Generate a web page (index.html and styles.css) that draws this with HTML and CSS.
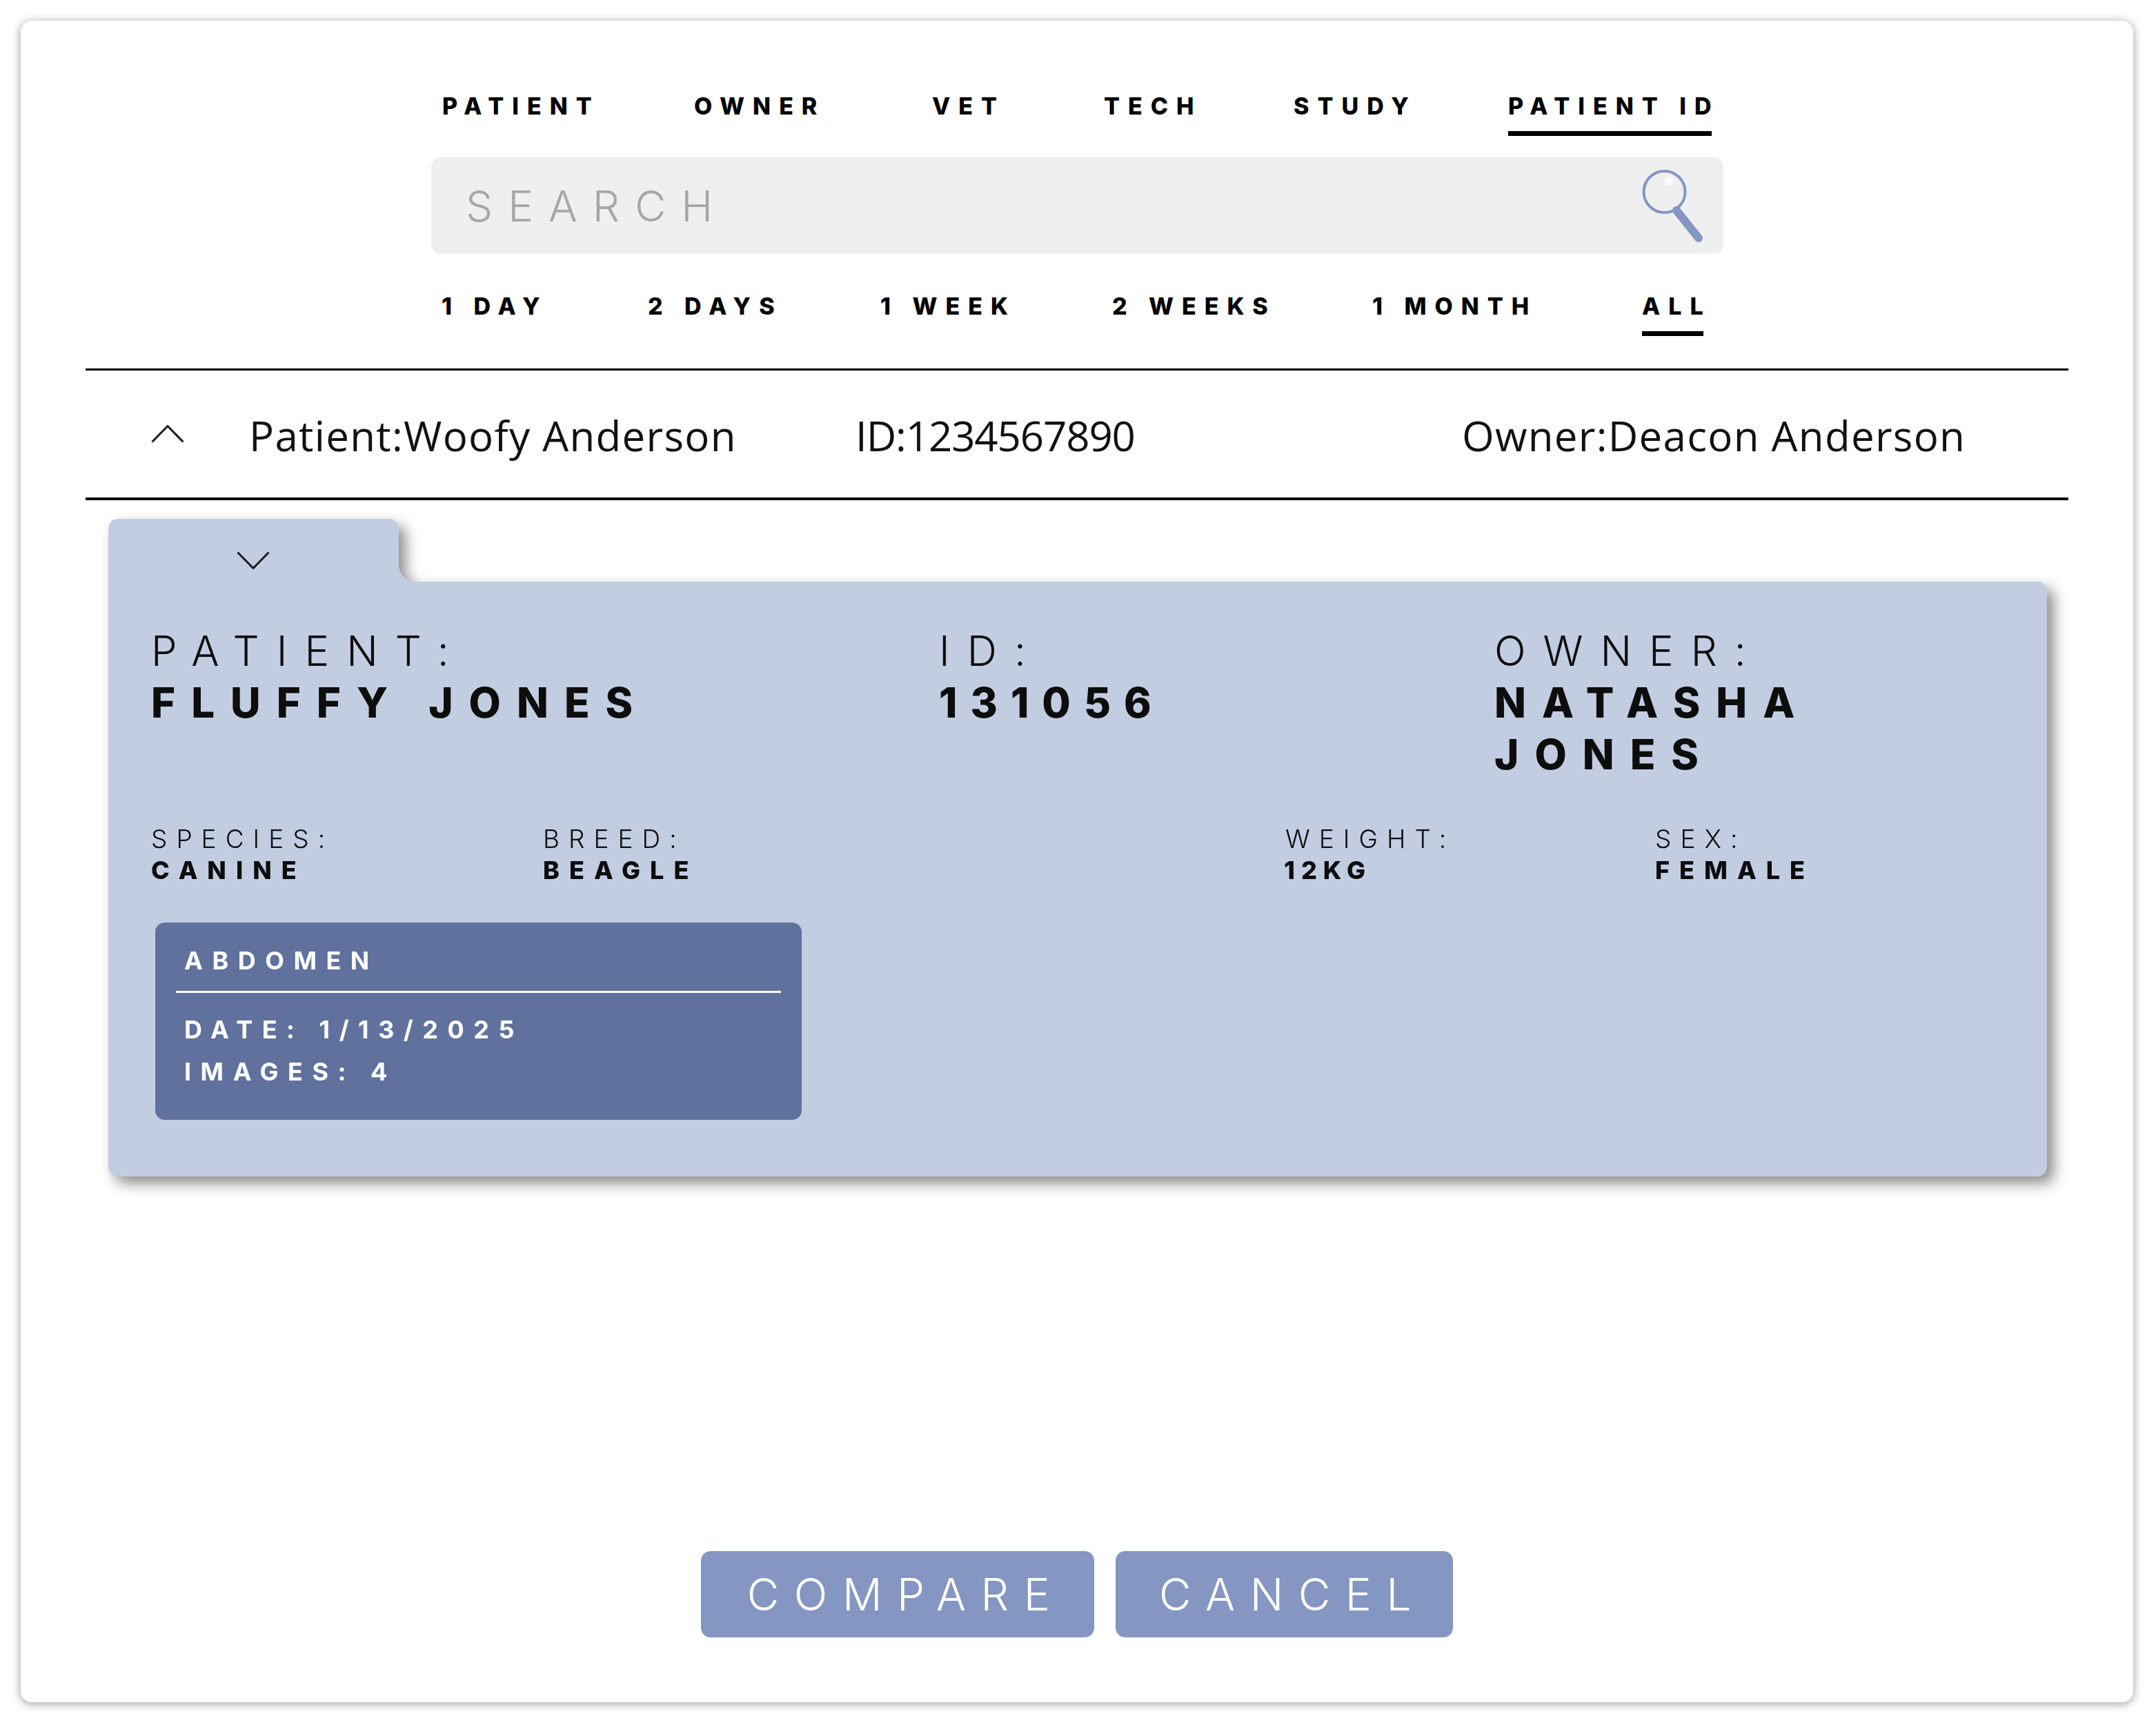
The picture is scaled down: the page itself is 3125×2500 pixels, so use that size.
FILE: index.html
```html
<!DOCTYPE html>
<html lang="en">
<head>
  <meta charset="UTF-8">
  <title>Compare Study</title>
  <link rel="stylesheet" href="styles.css">
</head>
<body>
  <div class="window">
    <div class="filters">
      <div class="tabs field-tabs">
        <span>PATIENT</span>
        <span>OWNER</span>
        <span>VET</span>
        <span>TECH</span>
        <span>STUDY</span>
        <span class="active">PATIENT ID</span>
      </div>
      <div class="search">
        <span class="search-text">SEARCH</span>
        <svg class="search-icon" viewBox="0 0 88 110">
          <circle cx="32.5" cy="33" r="30" fill="none" stroke="#8496c1" stroke-width="4"/>
          <circle cx="39" cy="18" r="6.5" fill="#fafafa"/>
          <path d="M50 60 L82 100" fill="none" stroke="#8496c1" stroke-width="12" stroke-linecap="round"/>
        </svg>
      </div>
      <div class="tabs time-tabs">
        <span>1 DAY</span>
        <span>2 DAYS</span>
        <span>1 WEEK</span>
        <span>2 WEEKS</span>
        <span>1 MONTH</span>
        <span class="active">ALL</span>
      </div>
    </div>

    <div class="result-row">
      <svg class="chevron" viewBox="0 0 48 26"><path d="M1.5 24.5 L24 1.5 L46.5 24.5"/></svg>
      <span>Patient:Woofy Anderson</span>
      <span class="result-id">ID:1234567890</span>
      <span>Owner:Deacon Anderson</span>
    </div>

    <div class="folder">
      <div class="folder-tab">
        <svg class="chevron" viewBox="0 0 48 26"><path d="M1.5 1.5 L24 24.5 L46.5 1.5"/></svg>
      </div>
      <div class="folder-body">
        <div class="main-info">
          <div class="info-big">
            <div class="label">PATIENT:</div>
            <div class="value">FLUFFY JONES</div>
          </div>
          <div class="info-big">
            <div class="label">ID:</div>
            <div class="value digits">131056</div>
          </div>
          <div class="info-big">
            <div class="label">OWNER:</div>
            <div class="value">NATASHA JONES</div>
          </div>
        </div>
        <div class="sub-info">
          <div class="info-small">
            <div class="label">SPECIES:</div>
            <div class="value">CANINE</div>
          </div>
          <div class="info-small">
            <div class="label">BREED:</div>
            <div class="value">BEAGLE</div>
          </div>
          <div class="info-small">
            <div class="label">WEIGHT:</div>
            <div class="value digits">12KG</div>
          </div>
          <div class="info-small">
            <div class="label">SEX:</div>
            <div class="value">FEMALE</div>
          </div>
        </div>
        <div class="study-card">
          <div class="study-title">ABDOMEN</div>
          <div class="study-line">DATE: 1/13/2025</div>
          <div class="study-line">IMAGES: 4</div>
        </div>
      </div>
    </div>

    <div class="actions">
      <button class="compare-btn">COMPARE</button>
      <button class="cancel-btn">CANCEL</button>
    </div>
  </div>
</body>
</html>
```

FILE: styles.css
```css
html, body {
  margin: 0;
  padding: 0;
  background-color: #FFFFFF;
}
body {
  width: 3125px;
  height: 2500px;
  overflow: hidden;
  font-family: Inter, "Liberation Sans", sans-serif;
  color: #000000;
}
.window {
  margin: 30px 0 0 30px;
  width: 3062px;
  height: 2437px;
  box-sizing: border-box;
  background-color: #FFFFFF;
  border-radius: 16px;
  box-shadow: 0 2px 14px rgba(0, 0, 0, 0.4);
  padding-top: 111px;
  display: flex;
  flex-direction: column;
  position: relative;
}
.filters {
  margin-left: 595px;
  width: 1873px;
}
.tabs {
  display: grid;
  justify-items: start;
  font-weight: 800;
  font-size: 34px;
  line-height: 25px;
  letter-spacing: 12px;
}
.tabs span {
  white-space: nowrap;
}
.tabs .active {
  position: relative;
}
.tabs .active::after {
  content: "";
  position: absolute;
  left: 0;
  right: 12px;
  bottom: -31px;
  height: 7px;
  background-color: #000000;
}
.field-tabs {
  margin-left: 16px;
  grid-template-columns: 365px 345px 249px 275px 311px auto;
}
.time-tabs {
  margin: 63px 0 0 15px;
  grid-template-columns: 299px 337px 336px 377px 391px auto;
}
.search {
  margin-top: 62px;
  height: 140px;
  background-color: #EFEFEF;
  border-radius: 14px;
  padding: 0 30px 0 50px;
  display: flex;
  align-items: center;
  justify-content: space-between;
}
.search-text {
  font-size: 62px;
  font-weight: 300;
  color: #A6A6A6;
  letter-spacing: 22px;
}
.search-icon {
  width: 88px;
  height: 110px;
  margin-top: 4px;
}
.result-row {
  margin: 78px 94px 0 94px;
  height: 184px;
  border-top: 3px solid #000000;
  border-bottom: 4px solid #000000;
  display: grid;
  grid-template-columns: 142px 879px 879px 1fr;
  padding-left: 95px;
  align-items: center;
  font-family: "Open Sans", sans-serif;
  font-size: 60px;
  letter-spacing: 1.3px;
  color: #111111;
}
.result-row span {
  padding-top: 3px;
  white-space: nowrap;
}
.result-id {
  letter-spacing: -1.1px;
}
.chevron {
  width: 48px;
  height: 26px;
  display: block;
}
.chevron path {
  fill: none;
  stroke: #1A1A1A;
  stroke-width: 3;
}
.folder {
  margin: 27px 0 0 127px;
  width: 2810px;
  filter: drop-shadow(10px 10px 10px rgba(0, 0, 0, 0.45));
}
.folder-tab {
  width: 421px;
  height: 91px;
  box-sizing: border-box;
  background-color: #C3CDE2;
  border-radius: 14px 14px 0 0;
  padding: 47px 0 0 186px;
  position: relative;
}
.folder-tab::after {
  content: "";
  position: absolute;
  left: 100%;
  bottom: 0;
  width: 24px;
  height: 24px;
  background: radial-gradient(circle at 100% 0, transparent 23.5px, #C3CDE2 24px);
}
.folder-body {
  height: 862px;
  box-sizing: border-box;
  background-color: #C3CDE2;
  border-radius: 0 14px 14px 14px;
  padding: 62px 0 0 62px;
  color: #0D0D0D;
}
.main-info {
  display: grid;
  grid-template-columns: 1142px 805px 520px;
}
.info-big .label {
  font-size: 60px;
  font-weight: 300;
  line-height: 76px;
  letter-spacing: 25px;
}
.info-big .value {
  font-size: 60px;
  font-weight: 800;
  line-height: 75px;
  letter-spacing: 23px;
}
.info-big .digits {
  letter-spacing: 19px;
}
.sub-info {
  margin-top: 62px;
  display: grid;
  grid-template-columns: 568px 1076px 536px 300px;
}
.info-small .label {
  font-size: 37px;
  font-weight: 300;
  line-height: 45px;
  letter-spacing: 13px;
}
.info-small .value {
  font-size: 36px;
  font-weight: 800;
  line-height: 46px;
  letter-spacing: 14px;
}
.info-small .digits {
  letter-spacing: 9px;
  margin-left: -2px;
}
.study-card {
  margin: 53px 0 0 6px;
  width: 937px;
  height: 286px;
  box-sizing: border-box;
  background-color: #61719E;
  border-radius: 14px;
  color: #FFFFFF;
  padding: 37px 30px 0 30px;
  font-weight: 700;
  font-size: 36px;
  letter-spacing: 13.5px;
}
.study-title {
  padding: 0 0 26px 12px;
  line-height: 36px;
  border-bottom: 3px solid #FFFFFF;
  margin-bottom: 23px;
}
.study-line {
  padding-left: 12px;
  line-height: 61px;
}
.actions {
  position: absolute;
  left: 986px;
  top: 2218px;
  display: flex;
  gap: 31px;
}
.actions button {
  height: 125px;
  border: none;
  border-radius: 14px;
  background-color: #8496C1;
  color: #FFFFFF;
  font-family: Inter, sans-serif;
  font-size: 64px;
  font-weight: 300;
  letter-spacing: 21.5px;
  padding: 0 0 0 24px;
}
.compare-btn {
  width: 570px;
}
.cancel-btn {
  width: 489px;
}
```
